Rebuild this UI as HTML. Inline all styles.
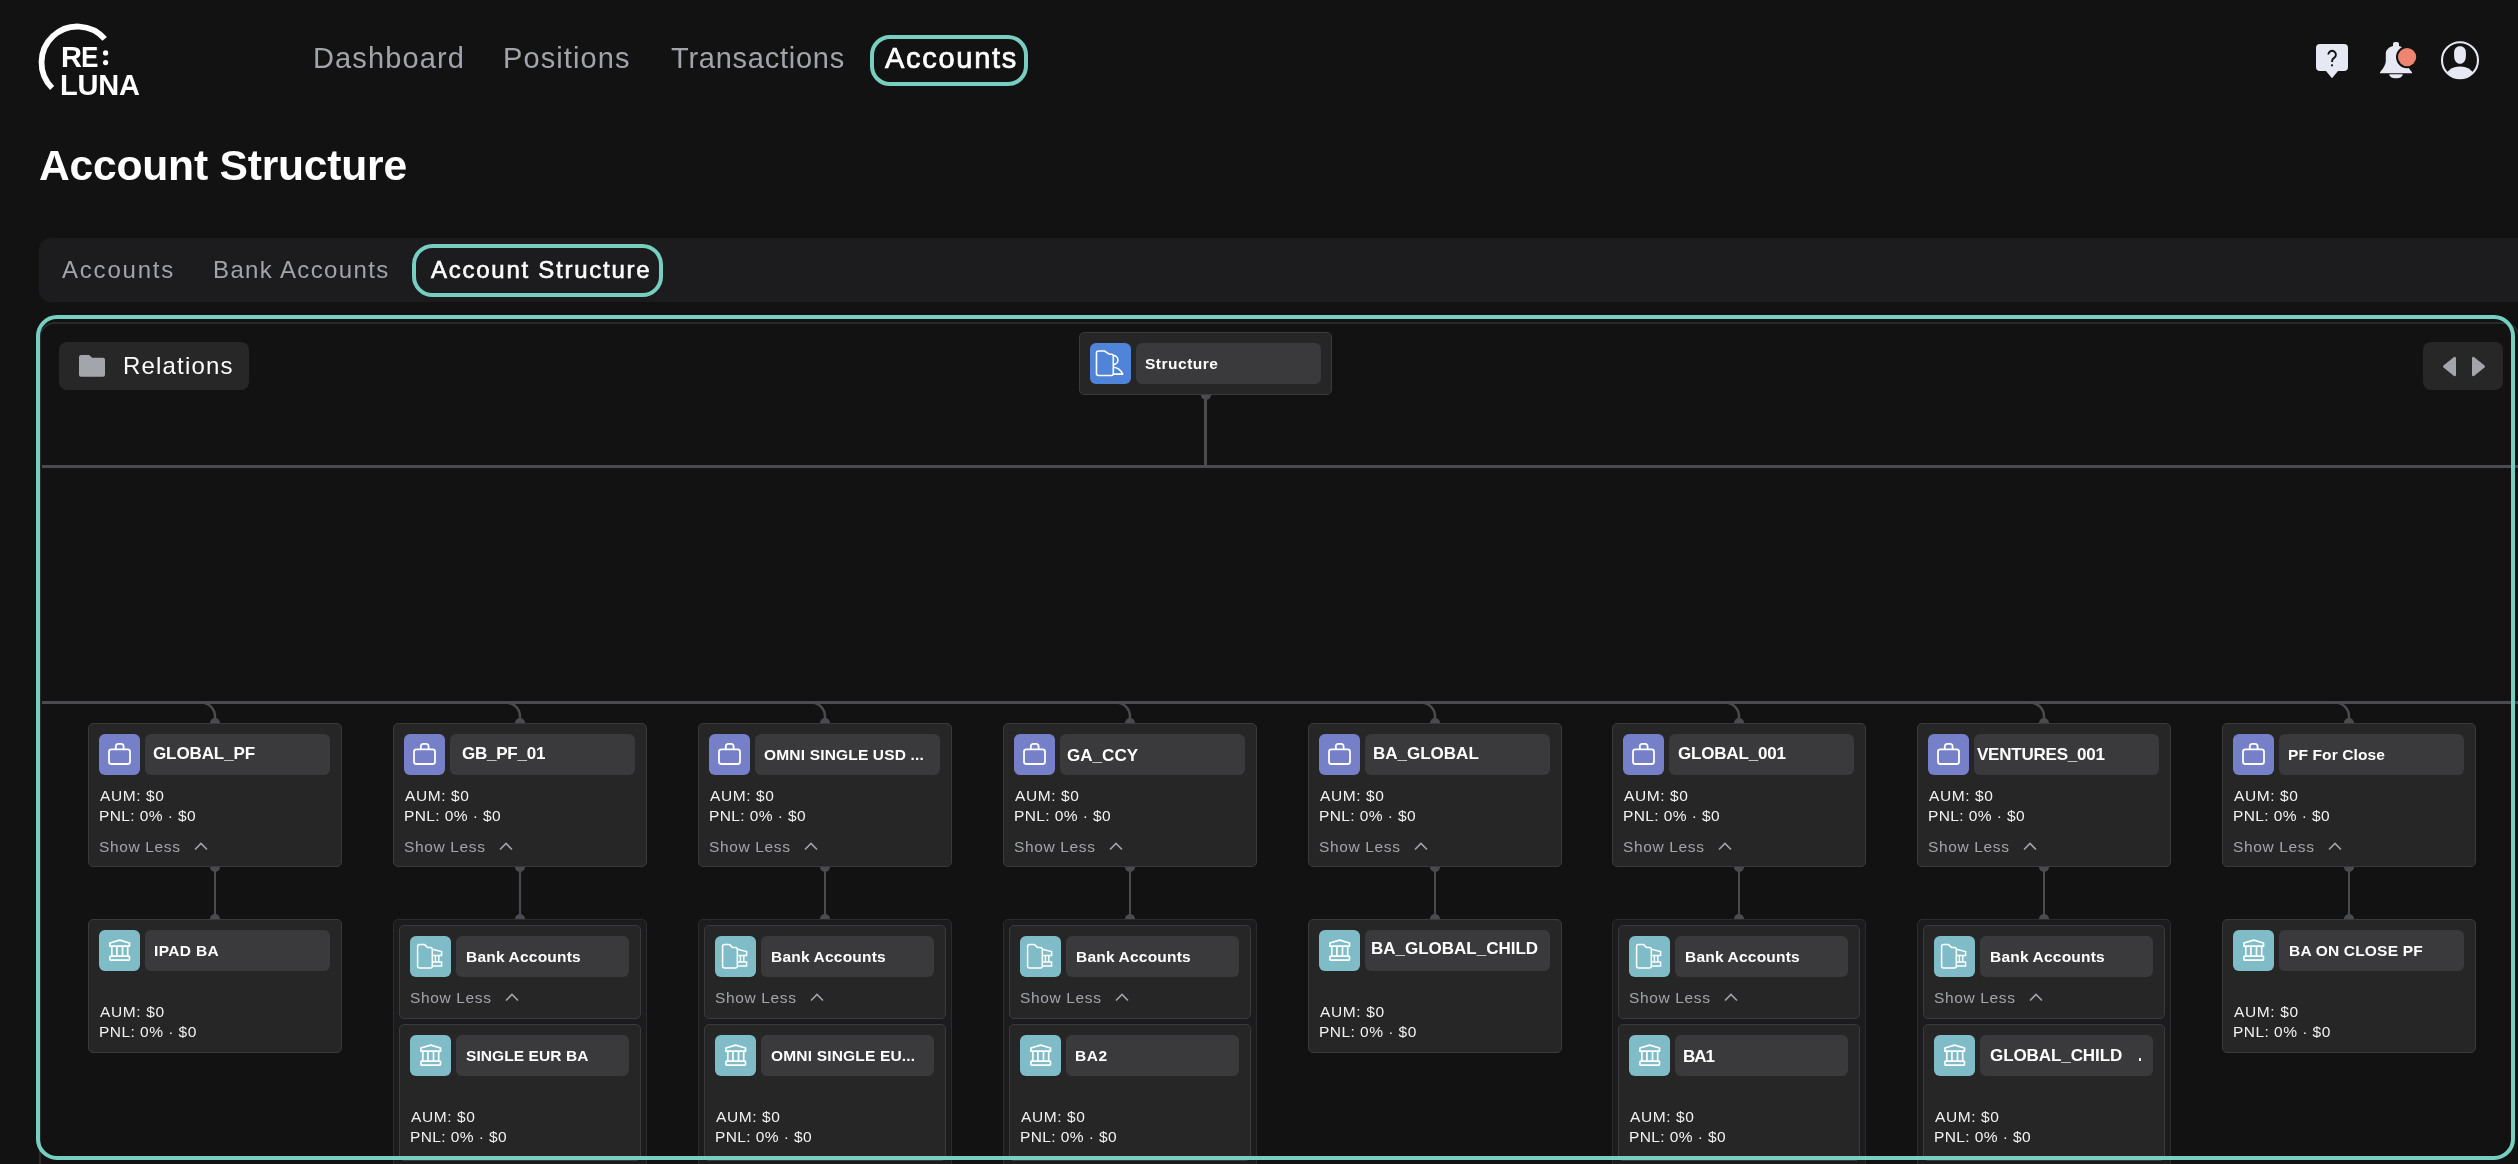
<!DOCTYPE html>
<html><head><meta charset="utf-8"><title>Account Structure</title>
<style>
html,body{margin:0;padding:0;}
body{width:2518px;height:1164px;background:#121212;position:relative;overflow:hidden;font-family:"Liberation Sans",sans-serif;}
.t{position:absolute;white-space:nowrap;will-change:transform;}
.b{position:absolute;}
</style></head><body>
<svg class="b" style="left:0;top:0" width="160" height="110" viewBox="0 0 160 110">
<path d="M52.1 88 A36 36 0 1 1 104.7 38.9" fill="none" stroke="#fff" stroke-width="5.8"/>
<circle cx="105.6" cy="52.9" r="2.6" fill="#fff"/><circle cx="105.6" cy="62.6" r="2.6" fill="#fff"/>
</svg>
<div class="t" style="left:60.68px;top:43px;font-size:29px;line-height:29px;color:#fff;font-weight:700;letter-spacing:0.000px;">R</div>
<div class="t" style="left:81.03px;top:43px;font-size:29px;line-height:29px;color:#fff;font-weight:700;letter-spacing:0.000px;transform:scaleX(0.9);transform-origin:0 0;">E</div>
<div class="t" style="left:60.11px;top:71px;font-size:29px;line-height:29px;color:#fff;font-weight:700;letter-spacing:-0.179px;">LUNA</div>
<div class="t" style="left:312.58px;top:44px;font-size:29px;line-height:29px;color:#a2a4ac;font-weight:400;letter-spacing:1.114px;">Dashboard</div>
<div class="t" style="left:503.44px;top:44px;font-size:29px;line-height:29px;color:#a2a4ac;font-weight:400;letter-spacing:1.115px;">Positions</div>
<div class="t" style="left:670.65px;top:44px;font-size:29px;line-height:29px;color:#a2a4ac;font-weight:400;letter-spacing:0.753px;">Transactions</div>
<div class="b" style="left:870px;top:35px;width:158px;height:51px;background:none;border:4px solid #76cfc1;border-radius:20px;box-sizing:border-box;"></div>
<div class="t" style="left:884.80px;top:44px;font-size:29px;line-height:29px;color:#fff;font-weight:400;letter-spacing:1.709px;-webkit-text-stroke:0.7px #fff;">Accounts</div>
<svg class="b" style="left:2300px;top:30px" width="200" height="60" viewBox="2300 30 200 60">
<defs><clipPath id="avc"><circle cx="2460" cy="60.2" r="17.8"/></clipPath></defs>
<path d="M2320 44 h24 a4 4 0 0 1 4 4 v19 a4 4 0 0 1 -4 4 h-6 l-6 7.2 l-6 -7.2 h-6 a4 4 0 0 1 -4 -4 v-19 a4 4 0 0 1 4 -4z" fill="#e6e8f3"/>
<path d="M2328.3 54.6 a3.8 3.8 0 1 1 5.8 3.3 c-1.2 .8 -2 1.6 -2 3.1 v.9" fill="none" stroke="#121212" stroke-width="1.9"/>
<circle cx="2332" cy="65.3" r="1.15" fill="#121212"/>
<path d="M2393 46 C2389 47 2386 49.5 2385.8 53.5 V61 C2385.8 64 2384 67.5 2380 72.3 V73.3 H2412 V72.3 C2408 67.5 2406.2 64 2406.2 61 V53.5 C2406 49.5 2403 47 2399 46 V44 A2 2 0 0 0 2397 42 H2395 A2 2 0 0 0 2393 44 Z" fill="#e6e8f3"/>
<path d="M2389.3 74.3 H2402.7 C2402.7 76.8 2400 78.3 2396 78.3 C2392 78.3 2389.3 76.8 2389.3 74.3Z" fill="#e6e8f3"/>
<circle cx="2407.1" cy="57.1" r="11.1" fill="#121212"/>
<circle cx="2407.1" cy="57.1" r="9.1" fill="#ee8570"/>
<circle cx="2460" cy="60.2" r="18" fill="none" stroke="#e6e8f3" stroke-width="2.1"/>
<path d="M2460 46.2 c3.6 0 5.9 2.4 5.9 6.5 v3.2 c0 4.6 -2.5 7.9 -5.9 7.9 s-5.9 -3.3 -5.9 -7.9 v-3.2 c0 -4.1 2.3 -6.5 5.9 -6.5z" fill="#e6e8f3"/>
<ellipse cx="2460" cy="77.8" rx="14.6" ry="11.3" fill="#e6e8f3" clip-path="url(#avc)"/>
</svg>
<div class="t" style="left:39.28px;top:144px;font-size:42.6px;line-height:42.6px;color:#fff;font-weight:700;letter-spacing:-0.216px;">Account Structure</div>
<div class="b" style="left:39px;top:238px;width:2600px;height:64px;background:#1c1c1e;border-radius:12px;"></div>
<div class="t" style="left:61.87px;top:258px;font-size:24px;line-height:24px;color:#a2a4ac;font-weight:400;letter-spacing:1.798px;">Accounts</div>
<div class="t" style="left:213.48px;top:258px;font-size:24px;line-height:24px;color:#a2a4ac;font-weight:400;letter-spacing:1.377px;">Bank Accounts</div>
<div class="b" style="left:412px;top:244px;width:251px;height:53px;background:none;border:4px solid #76cfc1;border-radius:20.5px;box-sizing:border-box;"></div>
<div class="t" style="left:430.67px;top:258px;font-size:24px;line-height:24px;color:#fff;font-weight:400;letter-spacing:1.740px;-webkit-text-stroke:0.6px #fff;">Account Structure</div>
<div class="b" style="left:39px;top:322px;width:2481px;height:1000px;background:none;border:2px solid #2a2a2a;border-radius:16px;box-sizing:border-box;"></div>
<div class="b" style="left:59px;top:342px;width:190px;height:48px;background:#272727;border-radius:8px;"></div>
<svg class="b" style="left:70px;top:350px" width="40" height="34" viewBox="70 350 40 34">
<path d="M81 355 h7 c1.2 0 1.8 .4 2.6 1.2 l1.6 1.6 h10.8 a2 2 0 0 1 2 2 v15 a2 2 0 0 1 -2 2 h-22 a2 2 0 0 1 -2 -2 v-17.8 a2 2 0 0 1 2 -2z" fill="#a3a5ad"/>
</svg>
<div class="t" style="left:122.74px;top:354px;font-size:24px;line-height:24px;color:#fff;font-weight:400;letter-spacing:1.171px;">Relations</div>
<div class="b" style="left:2423px;top:342px;width:80px;height:48px;background:#272727;border-radius:8px;"></div>
<svg class="b" style="left:2430px;top:350px" width="70" height="34" viewBox="2430 350 70 34">
<path d="M2456 357 v18 a1.2 1.2 0 0 1 -2 .9 l-10.5 -8.5 a1.2 1.2 0 0 1 0 -1.8 l10.5 -8.5 a1.2 1.2 0 0 1 2 .9z" fill="#a3a5ad"/>
<path d="M2472 357 v18 a1.2 1.2 0 0 0 2 .9 l10.5 -8.5 a1.2 1.2 0 0 0 0 -1.8 l-10.5 -8.5 a1.2 1.2 0 0 0 -2 .9z" fill="#a3a5ad"/>
</svg>
<div class="b" style="left:1079px;top:332px;width:253px;height:63px;background:#262626;border:1px solid #3a3a3c;border-radius:5px;box-sizing:border-box;"></div>
<svg class="b" style="left:1090px;top:343px" width="41" height="41" viewBox="0 0 41 41"><rect width="41" height="41" rx="6" fill="#4f84d8"/><path d="M6.5 10 a2 2 0 0 1 2 -2 h5.9 l4.8 3.2 h2.1 a2 2 0 0 1 2 2 v17.3 a2 2 0 0 1 -2 2 h-12.8 a2 2 0 0 1 -2 -2z" fill="none" stroke="#fff" stroke-width="1.6" stroke-linejoin="round"/><path d="M23.3 12.4 a4.6 4.6 0 0 1 0 9.2 M23.3 24.3 c4 0.3 7.6 3 9.4 6.8 h-9.4" fill="none" stroke="#fff" stroke-width="1.6" stroke-linejoin="round"/></svg>
<div class="b" style="left:1136px;top:343px;width:185px;height:41px;background:#3a3a3c;border-radius:6px;"></div>
<div class="t" style="left:1144.94px;top:356px;font-size:15.5px;line-height:15.5px;color:#fff;font-weight:700;letter-spacing:0.501px;">Structure</div>
<div class="b" style="left:1204px;top:395px;width:3px;height:71px;background:#4a4b4f;border-radius:0px;"></div>
<div class="b" style="left:42px;top:465px;width:2600px;height:3px;background:#4a4b4f;border-radius:0px;"></div>
<div class="b" style="left:42px;top:701px;width:2600px;height:3px;background:#4a4b4f;border-radius:0px;"></div>
<div class="b" style="left:1200.5px;top:395px;width:10px;height:5px;background:#4a4b4f;border-radius:0 0 5px 5px"></div>
<svg class="b" style="left:195px;top:700px" width="24" height="24" viewBox="0 0 24 24"><path d="M4 2.5 h2 a14 14 0 0 1 14 14 v4" fill="none" stroke="#4a4b4f" stroke-width="2.5"/></svg>
<div class="b" style="left:210px;top:718px;width:10px;height:5px;background:#4a4b4f;border-radius:5px 5px 0 0"></div>
<div class="b" style="left:88px;top:723px;width:254px;height:144px;background:#262626;border:1px solid #3a3a3c;border-radius:5px;box-sizing:border-box;"></div>
<svg class="b" style="left:99px;top:734px" width="41" height="41" viewBox="0 0 41 41"><rect width="41" height="41" rx="6" fill="#7580c8"/><rect x="10" y="15.4" width="21" height="14.6" rx="2.4" fill="none" stroke="#fff" stroke-width="1.8"/><path d="M16.8 15.4 v-3 a2.6 2.6 0 0 1 2.6 -2.6 h2.6 a2.6 2.6 0 0 1 2.6 2.6 v3" fill="none" stroke="#fff" stroke-width="1.8"/></svg>
<div class="b" style="left:145px;top:734px;width:185px;height:41px;background:#3a3a3c;border-radius:6px;"></div>
<div class="t" style="left:152.63px;top:745px;font-size:17px;line-height:17px;color:#fff;font-weight:700;letter-spacing:-0.102px;">GLOBAL_PF</div>
<div class="t" style="left:100.16px;top:788px;font-size:15.5px;line-height:15.5px;color:#f2f2f2;font-weight:400;letter-spacing:0.606px;">AUM: $0</div>
<div class="t" style="left:99.07px;top:808px;font-size:15.5px;line-height:15.5px;color:#f2f2f2;font-weight:400;letter-spacing:0.405px;">PNL: 0% · $0</div>
<div class="t" style="left:98.73px;top:839px;font-size:15.5px;line-height:15.5px;color:#a3a5ad;font-weight:400;letter-spacing:0.633px;">Show Less</div>
<svg class="b" style="left:194px;top:842px" width="14" height="9" viewBox="0 0 14 9"><path d="M1 7.5 l6 -6 l6 6" fill="none" stroke="#a3a5ad" stroke-width="1.6"/></svg>
<div class="b" style="left:210px;top:867px;width:10px;height:5px;background:#4a4b4f;border-radius:0 0 5px 5px"></div>
<div class="b" style="left:213.75px;top:870px;width:2.5px;height:47px;background:#4a4b4f;border-radius:0px;"></div>
<div class="b" style="left:210px;top:914px;width:10px;height:5px;background:#4a4b4f;border-radius:5px 5px 0 0"></div>
<div class="b" style="left:88px;top:919px;width:254px;height:134px;background:#262626;border:1px solid #3a3a3c;border-radius:5px;box-sizing:border-box;"></div>
<svg class="b" style="left:99px;top:930px" width="41" height="41" viewBox="0 0 41 41"><rect width="41" height="41" rx="6" fill="#7fbcc8"/><path d="M10.9 16.2 v-3.2 l9.8 -2.9 l9.8 2.9 v3.2z" fill="none" stroke="#fff" stroke-width="1.7" stroke-linejoin="round"/><path d="M12.8 16.4 v9.6 M17.9 16.4 v9.6 M23.5 16.4 v9.6 M28.7 16.4 v9.6" fill="none" stroke="#fff" stroke-width="1.7"/><rect x="10.9" y="26.2" width="19.6" height="3.9" rx="0.8" fill="none" stroke="#fff" stroke-width="1.7"/></svg>
<div class="b" style="left:145px;top:930px;width:185px;height:41px;background:#3a3a3c;border-radius:6px;"></div>
<div class="t" style="left:154.29px;top:943px;font-size:15.5px;line-height:15.5px;color:#fff;font-weight:700;letter-spacing:0.350px;">IPAD BA</div>
<div class="t" style="left:99.96px;top:1004px;font-size:15.5px;line-height:15.5px;color:#f2f2f2;font-weight:400;letter-spacing:0.638px;">AUM: $0</div>
<div class="t" style="left:98.72px;top:1024px;font-size:15.5px;line-height:15.5px;color:#f2f2f2;font-weight:400;letter-spacing:0.468px;">PNL: 0% · $0</div>
<svg class="b" style="left:500px;top:700px" width="24" height="24" viewBox="0 0 24 24"><path d="M4 2.5 h2 a14 14 0 0 1 14 14 v4" fill="none" stroke="#4a4b4f" stroke-width="2.5"/></svg>
<div class="b" style="left:515px;top:718px;width:10px;height:5px;background:#4a4b4f;border-radius:5px 5px 0 0"></div>
<div class="b" style="left:393px;top:723px;width:254px;height:144px;background:#262626;border:1px solid #3a3a3c;border-radius:5px;box-sizing:border-box;"></div>
<svg class="b" style="left:404px;top:734px" width="41" height="41" viewBox="0 0 41 41"><rect width="41" height="41" rx="6" fill="#7580c8"/><rect x="10" y="15.4" width="21" height="14.6" rx="2.4" fill="none" stroke="#fff" stroke-width="1.8"/><path d="M16.8 15.4 v-3 a2.6 2.6 0 0 1 2.6 -2.6 h2.6 a2.6 2.6 0 0 1 2.6 2.6 v3" fill="none" stroke="#fff" stroke-width="1.8"/></svg>
<div class="b" style="left:450px;top:734px;width:185px;height:41px;background:#3a3a3c;border-radius:6px;"></div>
<div class="t" style="left:462.16px;top:745px;font-size:17px;line-height:17px;color:#fff;font-weight:700;letter-spacing:-0.244px;">GB_PF_01</div>
<div class="t" style="left:405.16px;top:788px;font-size:15.5px;line-height:15.5px;color:#f2f2f2;font-weight:400;letter-spacing:0.606px;">AUM: $0</div>
<div class="t" style="left:404.07px;top:808px;font-size:15.5px;line-height:15.5px;color:#f2f2f2;font-weight:400;letter-spacing:0.405px;">PNL: 0% · $0</div>
<div class="t" style="left:403.73px;top:839px;font-size:15.5px;line-height:15.5px;color:#a3a5ad;font-weight:400;letter-spacing:0.633px;">Show Less</div>
<svg class="b" style="left:499px;top:842px" width="14" height="9" viewBox="0 0 14 9"><path d="M1 7.5 l6 -6 l6 6" fill="none" stroke="#a3a5ad" stroke-width="1.6"/></svg>
<div class="b" style="left:515px;top:867px;width:10px;height:5px;background:#4a4b4f;border-radius:0 0 5px 5px"></div>
<div class="b" style="left:518.75px;top:870px;width:2.5px;height:47px;background:#4a4b4f;border-radius:0px;"></div>
<div class="b" style="left:515px;top:914px;width:10px;height:5px;background:#4a4b4f;border-radius:5px 5px 0 0"></div>
<div class="b" style="left:393px;top:919px;width:254px;height:400px;background:#1c1c1e;border:1px solid #2c2c2e;border-radius:5px;box-sizing:border-box;"></div>
<div class="b" style="left:399px;top:925px;width:242px;height:94px;background:#262626;border:1px solid #3a3a3c;border-radius:5px;box-sizing:border-box;"></div>
<svg class="b" style="left:410px;top:936px" width="41" height="41" viewBox="0 0 41 41"><rect width="41" height="41" rx="6" fill="#7fbcc8"/><path d="M7.6 10.6 a2 2 0 0 1 2 -2 h5 l3 3 h2.7 a2 2 0 0 1 2 2 v16.4 a2 2 0 0 1 -2 2 h-10.7 a2 2 0 0 1 -2 -2z" fill="none" stroke="#fff" stroke-width="1.5" stroke-linejoin="round"/><path d="M22.3 13.2 l9.3 2.4 v3.9 h-9.3 M25.4 19.5 v6.5 M28.8 19.5 v6.5 M22.3 26 h9.3 v3.9 h-9.3" fill="none" stroke="#fff" stroke-width="1.5"/></svg>
<div class="b" style="left:456px;top:936px;width:173px;height:41px;background:#3a3a3c;border-radius:6px;"></div>
<div class="t" style="left:465.93px;top:949px;font-size:15.5px;line-height:15.5px;color:#fff;font-weight:700;letter-spacing:0.198px;">Bank Accounts</div>
<div class="t" style="left:409.86px;top:990px;font-size:15.5px;line-height:15.5px;color:#a3a5ad;font-weight:400;letter-spacing:0.635px;">Show Less</div>
<svg class="b" style="left:505px;top:993px" width="14" height="9" viewBox="0 0 14 9"><path d="M1 7.5 l6 -6 l6 6" fill="none" stroke="#a3a5ad" stroke-width="1.6"/></svg>
<div class="b" style="left:399px;top:1024px;width:242px;height:137px;background:#262626;border:1px solid #3a3a3c;border-radius:5px;box-sizing:border-box;"></div>
<svg class="b" style="left:410px;top:1035px" width="41" height="41" viewBox="0 0 41 41"><rect width="41" height="41" rx="6" fill="#7fbcc8"/><path d="M10.9 16.2 v-3.2 l9.8 -2.9 l9.8 2.9 v3.2z" fill="none" stroke="#fff" stroke-width="1.7" stroke-linejoin="round"/><path d="M12.8 16.4 v9.6 M17.9 16.4 v9.6 M23.5 16.4 v9.6 M28.7 16.4 v9.6" fill="none" stroke="#fff" stroke-width="1.7"/><rect x="10.9" y="26.2" width="19.6" height="3.9" rx="0.8" fill="none" stroke="#fff" stroke-width="1.7"/></svg>
<div class="b" style="left:456px;top:1035px;width:173px;height:41px;background:#3a3a3c;border-radius:6px;"></div>
<div class="t" style="left:465.88px;top:1048px;font-size:15.5px;line-height:15.5px;color:#fff;font-weight:700;letter-spacing:0.076px;">SINGLE EUR BA</div>
<div class="t" style="left:410.89px;top:1109px;font-size:15.5px;line-height:15.5px;color:#f2f2f2;font-weight:400;letter-spacing:0.579px;">AUM: $0</div>
<div class="t" style="left:409.67px;top:1129px;font-size:15.5px;line-height:15.5px;color:#f2f2f2;font-weight:400;letter-spacing:0.399px;">PNL: 0% · $0</div>
<svg class="b" style="left:805px;top:700px" width="24" height="24" viewBox="0 0 24 24"><path d="M4 2.5 h2 a14 14 0 0 1 14 14 v4" fill="none" stroke="#4a4b4f" stroke-width="2.5"/></svg>
<div class="b" style="left:820px;top:718px;width:10px;height:5px;background:#4a4b4f;border-radius:5px 5px 0 0"></div>
<div class="b" style="left:698px;top:723px;width:254px;height:144px;background:#262626;border:1px solid #3a3a3c;border-radius:5px;box-sizing:border-box;"></div>
<svg class="b" style="left:709px;top:734px" width="41" height="41" viewBox="0 0 41 41"><rect width="41" height="41" rx="6" fill="#7580c8"/><rect x="10" y="15.4" width="21" height="14.6" rx="2.4" fill="none" stroke="#fff" stroke-width="1.8"/><path d="M16.8 15.4 v-3 a2.6 2.6 0 0 1 2.6 -2.6 h2.6 a2.6 2.6 0 0 1 2.6 2.6 v3" fill="none" stroke="#fff" stroke-width="1.8"/></svg>
<div class="b" style="left:755px;top:734px;width:185px;height:41px;background:#3a3a3c;border-radius:6px;"></div>
<div class="t" style="left:764.24px;top:747px;font-size:15.5px;line-height:15.5px;color:#fff;font-weight:700;letter-spacing:0.174px;">OMNI SINGLE USD ...</div>
<div class="t" style="left:710.16px;top:788px;font-size:15.5px;line-height:15.5px;color:#f2f2f2;font-weight:400;letter-spacing:0.606px;">AUM: $0</div>
<div class="t" style="left:709.07px;top:808px;font-size:15.5px;line-height:15.5px;color:#f2f2f2;font-weight:400;letter-spacing:0.405px;">PNL: 0% · $0</div>
<div class="t" style="left:708.73px;top:839px;font-size:15.5px;line-height:15.5px;color:#a3a5ad;font-weight:400;letter-spacing:0.633px;">Show Less</div>
<svg class="b" style="left:804px;top:842px" width="14" height="9" viewBox="0 0 14 9"><path d="M1 7.5 l6 -6 l6 6" fill="none" stroke="#a3a5ad" stroke-width="1.6"/></svg>
<div class="b" style="left:820px;top:867px;width:10px;height:5px;background:#4a4b4f;border-radius:0 0 5px 5px"></div>
<div class="b" style="left:823.75px;top:870px;width:2.5px;height:47px;background:#4a4b4f;border-radius:0px;"></div>
<div class="b" style="left:820px;top:914px;width:10px;height:5px;background:#4a4b4f;border-radius:5px 5px 0 0"></div>
<div class="b" style="left:698px;top:919px;width:254px;height:400px;background:#1c1c1e;border:1px solid #2c2c2e;border-radius:5px;box-sizing:border-box;"></div>
<div class="b" style="left:704px;top:925px;width:242px;height:94px;background:#262626;border:1px solid #3a3a3c;border-radius:5px;box-sizing:border-box;"></div>
<svg class="b" style="left:715px;top:936px" width="41" height="41" viewBox="0 0 41 41"><rect width="41" height="41" rx="6" fill="#7fbcc8"/><path d="M7.6 10.6 a2 2 0 0 1 2 -2 h5 l3 3 h2.7 a2 2 0 0 1 2 2 v16.4 a2 2 0 0 1 -2 2 h-10.7 a2 2 0 0 1 -2 -2z" fill="none" stroke="#fff" stroke-width="1.5" stroke-linejoin="round"/><path d="M22.3 13.2 l9.3 2.4 v3.9 h-9.3 M25.4 19.5 v6.5 M28.8 19.5 v6.5 M22.3 26 h9.3 v3.9 h-9.3" fill="none" stroke="#fff" stroke-width="1.5"/></svg>
<div class="b" style="left:761px;top:936px;width:173px;height:41px;background:#3a3a3c;border-radius:6px;"></div>
<div class="t" style="left:770.93px;top:949px;font-size:15.5px;line-height:15.5px;color:#fff;font-weight:700;letter-spacing:0.198px;">Bank Accounts</div>
<div class="t" style="left:714.86px;top:990px;font-size:15.5px;line-height:15.5px;color:#a3a5ad;font-weight:400;letter-spacing:0.635px;">Show Less</div>
<svg class="b" style="left:810px;top:993px" width="14" height="9" viewBox="0 0 14 9"><path d="M1 7.5 l6 -6 l6 6" fill="none" stroke="#a3a5ad" stroke-width="1.6"/></svg>
<div class="b" style="left:704px;top:1024px;width:242px;height:137px;background:#262626;border:1px solid #3a3a3c;border-radius:5px;box-sizing:border-box;"></div>
<svg class="b" style="left:715px;top:1035px" width="41" height="41" viewBox="0 0 41 41"><rect width="41" height="41" rx="6" fill="#7fbcc8"/><path d="M10.9 16.2 v-3.2 l9.8 -2.9 l9.8 2.9 v3.2z" fill="none" stroke="#fff" stroke-width="1.7" stroke-linejoin="round"/><path d="M12.8 16.4 v9.6 M17.9 16.4 v9.6 M23.5 16.4 v9.6 M28.7 16.4 v9.6" fill="none" stroke="#fff" stroke-width="1.7"/><rect x="10.9" y="26.2" width="19.6" height="3.9" rx="0.8" fill="none" stroke="#fff" stroke-width="1.7"/></svg>
<div class="b" style="left:761px;top:1035px;width:173px;height:41px;background:#3a3a3c;border-radius:6px;"></div>
<div class="t" style="left:770.56px;top:1048px;font-size:15.5px;line-height:15.5px;color:#fff;font-weight:700;letter-spacing:0.178px;">OMNI SINGLE EU...</div>
<div class="t" style="left:715.89px;top:1109px;font-size:15.5px;line-height:15.5px;color:#f2f2f2;font-weight:400;letter-spacing:0.579px;">AUM: $0</div>
<div class="t" style="left:714.67px;top:1129px;font-size:15.5px;line-height:15.5px;color:#f2f2f2;font-weight:400;letter-spacing:0.399px;">PNL: 0% · $0</div>
<svg class="b" style="left:1110px;top:700px" width="24" height="24" viewBox="0 0 24 24"><path d="M4 2.5 h2 a14 14 0 0 1 14 14 v4" fill="none" stroke="#4a4b4f" stroke-width="2.5"/></svg>
<div class="b" style="left:1125px;top:718px;width:10px;height:5px;background:#4a4b4f;border-radius:5px 5px 0 0"></div>
<div class="b" style="left:1003px;top:723px;width:254px;height:144px;background:#262626;border:1px solid #3a3a3c;border-radius:5px;box-sizing:border-box;"></div>
<svg class="b" style="left:1014px;top:734px" width="41" height="41" viewBox="0 0 41 41"><rect width="41" height="41" rx="6" fill="#7580c8"/><rect x="10" y="15.4" width="21" height="14.6" rx="2.4" fill="none" stroke="#fff" stroke-width="1.8"/><path d="M16.8 15.4 v-3 a2.6 2.6 0 0 1 2.6 -2.6 h2.6 a2.6 2.6 0 0 1 2.6 2.6 v3" fill="none" stroke="#fff" stroke-width="1.8"/></svg>
<div class="b" style="left:1060px;top:734px;width:185px;height:41px;background:#3a3a3c;border-radius:6px;"></div>
<div class="t" style="left:1066.81px;top:747px;font-size:17px;line-height:17px;color:#fff;font-weight:700;letter-spacing:0.056px;">GA_CCY</div>
<div class="t" style="left:1015.16px;top:788px;font-size:15.5px;line-height:15.5px;color:#f2f2f2;font-weight:400;letter-spacing:0.606px;">AUM: $0</div>
<div class="t" style="left:1014.07px;top:808px;font-size:15.5px;line-height:15.5px;color:#f2f2f2;font-weight:400;letter-spacing:0.405px;">PNL: 0% · $0</div>
<div class="t" style="left:1013.73px;top:839px;font-size:15.5px;line-height:15.5px;color:#a3a5ad;font-weight:400;letter-spacing:0.633px;">Show Less</div>
<svg class="b" style="left:1109px;top:842px" width="14" height="9" viewBox="0 0 14 9"><path d="M1 7.5 l6 -6 l6 6" fill="none" stroke="#a3a5ad" stroke-width="1.6"/></svg>
<div class="b" style="left:1125px;top:867px;width:10px;height:5px;background:#4a4b4f;border-radius:0 0 5px 5px"></div>
<div class="b" style="left:1128.75px;top:870px;width:2.5px;height:47px;background:#4a4b4f;border-radius:0px;"></div>
<div class="b" style="left:1125px;top:914px;width:10px;height:5px;background:#4a4b4f;border-radius:5px 5px 0 0"></div>
<div class="b" style="left:1003px;top:919px;width:254px;height:400px;background:#1c1c1e;border:1px solid #2c2c2e;border-radius:5px;box-sizing:border-box;"></div>
<div class="b" style="left:1009px;top:925px;width:242px;height:94px;background:#262626;border:1px solid #3a3a3c;border-radius:5px;box-sizing:border-box;"></div>
<svg class="b" style="left:1020px;top:936px" width="41" height="41" viewBox="0 0 41 41"><rect width="41" height="41" rx="6" fill="#7fbcc8"/><path d="M7.6 10.6 a2 2 0 0 1 2 -2 h5 l3 3 h2.7 a2 2 0 0 1 2 2 v16.4 a2 2 0 0 1 -2 2 h-10.7 a2 2 0 0 1 -2 -2z" fill="none" stroke="#fff" stroke-width="1.5" stroke-linejoin="round"/><path d="M22.3 13.2 l9.3 2.4 v3.9 h-9.3 M25.4 19.5 v6.5 M28.8 19.5 v6.5 M22.3 26 h9.3 v3.9 h-9.3" fill="none" stroke="#fff" stroke-width="1.5"/></svg>
<div class="b" style="left:1066px;top:936px;width:173px;height:41px;background:#3a3a3c;border-radius:6px;"></div>
<div class="t" style="left:1075.93px;top:949px;font-size:15.5px;line-height:15.5px;color:#fff;font-weight:700;letter-spacing:0.198px;">Bank Accounts</div>
<div class="t" style="left:1019.86px;top:990px;font-size:15.5px;line-height:15.5px;color:#a3a5ad;font-weight:400;letter-spacing:0.635px;">Show Less</div>
<svg class="b" style="left:1115px;top:993px" width="14" height="9" viewBox="0 0 14 9"><path d="M1 7.5 l6 -6 l6 6" fill="none" stroke="#a3a5ad" stroke-width="1.6"/></svg>
<div class="b" style="left:1009px;top:1024px;width:242px;height:137px;background:#262626;border:1px solid #3a3a3c;border-radius:5px;box-sizing:border-box;"></div>
<svg class="b" style="left:1020px;top:1035px" width="41" height="41" viewBox="0 0 41 41"><rect width="41" height="41" rx="6" fill="#7fbcc8"/><path d="M10.9 16.2 v-3.2 l9.8 -2.9 l9.8 2.9 v3.2z" fill="none" stroke="#fff" stroke-width="1.7" stroke-linejoin="round"/><path d="M12.8 16.4 v9.6 M17.9 16.4 v9.6 M23.5 16.4 v9.6 M28.7 16.4 v9.6" fill="none" stroke="#fff" stroke-width="1.7"/><rect x="10.9" y="26.2" width="19.6" height="3.9" rx="0.8" fill="none" stroke="#fff" stroke-width="1.7"/></svg>
<div class="b" style="left:1066px;top:1035px;width:173px;height:41px;background:#3a3a3c;border-radius:6px;"></div>
<div class="t" style="left:1075.29px;top:1048px;font-size:15.5px;line-height:15.5px;color:#fff;font-weight:700;letter-spacing:0.538px;">BA2</div>
<div class="t" style="left:1020.89px;top:1109px;font-size:15.5px;line-height:15.5px;color:#f2f2f2;font-weight:400;letter-spacing:0.579px;">AUM: $0</div>
<div class="t" style="left:1019.67px;top:1129px;font-size:15.5px;line-height:15.5px;color:#f2f2f2;font-weight:400;letter-spacing:0.399px;">PNL: 0% · $0</div>
<svg class="b" style="left:1415px;top:700px" width="24" height="24" viewBox="0 0 24 24"><path d="M4 2.5 h2 a14 14 0 0 1 14 14 v4" fill="none" stroke="#4a4b4f" stroke-width="2.5"/></svg>
<div class="b" style="left:1430px;top:718px;width:10px;height:5px;background:#4a4b4f;border-radius:5px 5px 0 0"></div>
<div class="b" style="left:1308px;top:723px;width:254px;height:144px;background:#262626;border:1px solid #3a3a3c;border-radius:5px;box-sizing:border-box;"></div>
<svg class="b" style="left:1319px;top:734px" width="41" height="41" viewBox="0 0 41 41"><rect width="41" height="41" rx="6" fill="#7580c8"/><rect x="10" y="15.4" width="21" height="14.6" rx="2.4" fill="none" stroke="#fff" stroke-width="1.8"/><path d="M16.8 15.4 v-3 a2.6 2.6 0 0 1 2.6 -2.6 h2.6 a2.6 2.6 0 0 1 2.6 2.6 v3" fill="none" stroke="#fff" stroke-width="1.8"/></svg>
<div class="b" style="left:1365px;top:734px;width:185px;height:41px;background:#3a3a3c;border-radius:6px;"></div>
<div class="t" style="left:1373.25px;top:745px;font-size:17px;line-height:17px;color:#fff;font-weight:700;letter-spacing:-0.002px;">BA_GLOBAL</div>
<div class="t" style="left:1320.16px;top:788px;font-size:15.5px;line-height:15.5px;color:#f2f2f2;font-weight:400;letter-spacing:0.606px;">AUM: $0</div>
<div class="t" style="left:1319.07px;top:808px;font-size:15.5px;line-height:15.5px;color:#f2f2f2;font-weight:400;letter-spacing:0.405px;">PNL: 0% · $0</div>
<div class="t" style="left:1318.73px;top:839px;font-size:15.5px;line-height:15.5px;color:#a3a5ad;font-weight:400;letter-spacing:0.633px;">Show Less</div>
<svg class="b" style="left:1414px;top:842px" width="14" height="9" viewBox="0 0 14 9"><path d="M1 7.5 l6 -6 l6 6" fill="none" stroke="#a3a5ad" stroke-width="1.6"/></svg>
<div class="b" style="left:1430px;top:867px;width:10px;height:5px;background:#4a4b4f;border-radius:0 0 5px 5px"></div>
<div class="b" style="left:1433.75px;top:870px;width:2.5px;height:47px;background:#4a4b4f;border-radius:0px;"></div>
<div class="b" style="left:1430px;top:914px;width:10px;height:5px;background:#4a4b4f;border-radius:5px 5px 0 0"></div>
<div class="b" style="left:1308px;top:919px;width:254px;height:134px;background:#262626;border:1px solid #3a3a3c;border-radius:5px;box-sizing:border-box;"></div>
<svg class="b" style="left:1319px;top:930px" width="41" height="41" viewBox="0 0 41 41"><rect width="41" height="41" rx="6" fill="#7fbcc8"/><path d="M10.9 16.2 v-3.2 l9.8 -2.9 l9.8 2.9 v3.2z" fill="none" stroke="#fff" stroke-width="1.7" stroke-linejoin="round"/><path d="M12.8 16.4 v9.6 M17.9 16.4 v9.6 M23.5 16.4 v9.6 M28.7 16.4 v9.6" fill="none" stroke="#fff" stroke-width="1.7"/><rect x="10.9" y="26.2" width="19.6" height="3.9" rx="0.8" fill="none" stroke="#fff" stroke-width="1.7"/></svg>
<div class="b" style="left:1365px;top:930px;width:185px;height:41px;background:#3a3a3c;border-radius:6px;"></div>
<div class="t" style="left:1371.25px;top:940px;font-size:17px;line-height:17px;color:#fff;font-weight:700;letter-spacing:-0.003px;">BA_GLOBAL_CHILD</div>
<div class="t" style="left:1319.96px;top:1004px;font-size:15.5px;line-height:15.5px;color:#f2f2f2;font-weight:400;letter-spacing:0.638px;">AUM: $0</div>
<div class="t" style="left:1318.72px;top:1024px;font-size:15.5px;line-height:15.5px;color:#f2f2f2;font-weight:400;letter-spacing:0.468px;">PNL: 0% · $0</div>
<svg class="b" style="left:1719px;top:700px" width="24" height="24" viewBox="0 0 24 24"><path d="M4 2.5 h2 a14 14 0 0 1 14 14 v4" fill="none" stroke="#4a4b4f" stroke-width="2.5"/></svg>
<div class="b" style="left:1734px;top:718px;width:10px;height:5px;background:#4a4b4f;border-radius:5px 5px 0 0"></div>
<div class="b" style="left:1612px;top:723px;width:254px;height:144px;background:#262626;border:1px solid #3a3a3c;border-radius:5px;box-sizing:border-box;"></div>
<svg class="b" style="left:1623px;top:734px" width="41" height="41" viewBox="0 0 41 41"><rect width="41" height="41" rx="6" fill="#7580c8"/><rect x="10" y="15.4" width="21" height="14.6" rx="2.4" fill="none" stroke="#fff" stroke-width="1.8"/><path d="M16.8 15.4 v-3 a2.6 2.6 0 0 1 2.6 -2.6 h2.6 a2.6 2.6 0 0 1 2.6 2.6 v3" fill="none" stroke="#fff" stroke-width="1.8"/></svg>
<div class="b" style="left:1669px;top:734px;width:185px;height:41px;background:#3a3a3c;border-radius:6px;"></div>
<div class="t" style="left:1677.81px;top:745px;font-size:17px;line-height:17px;color:#fff;font-weight:700;letter-spacing:-0.189px;">GLOBAL_001</div>
<div class="t" style="left:1624.16px;top:788px;font-size:15.5px;line-height:15.5px;color:#f2f2f2;font-weight:400;letter-spacing:0.606px;">AUM: $0</div>
<div class="t" style="left:1623.07px;top:808px;font-size:15.5px;line-height:15.5px;color:#f2f2f2;font-weight:400;letter-spacing:0.405px;">PNL: 0% · $0</div>
<div class="t" style="left:1622.73px;top:839px;font-size:15.5px;line-height:15.5px;color:#a3a5ad;font-weight:400;letter-spacing:0.633px;">Show Less</div>
<svg class="b" style="left:1718px;top:842px" width="14" height="9" viewBox="0 0 14 9"><path d="M1 7.5 l6 -6 l6 6" fill="none" stroke="#a3a5ad" stroke-width="1.6"/></svg>
<div class="b" style="left:1734px;top:867px;width:10px;height:5px;background:#4a4b4f;border-radius:0 0 5px 5px"></div>
<div class="b" style="left:1737.75px;top:870px;width:2.5px;height:47px;background:#4a4b4f;border-radius:0px;"></div>
<div class="b" style="left:1734px;top:914px;width:10px;height:5px;background:#4a4b4f;border-radius:5px 5px 0 0"></div>
<div class="b" style="left:1612px;top:919px;width:254px;height:400px;background:#1c1c1e;border:1px solid #2c2c2e;border-radius:5px;box-sizing:border-box;"></div>
<div class="b" style="left:1618px;top:925px;width:242px;height:94px;background:#262626;border:1px solid #3a3a3c;border-radius:5px;box-sizing:border-box;"></div>
<svg class="b" style="left:1629px;top:936px" width="41" height="41" viewBox="0 0 41 41"><rect width="41" height="41" rx="6" fill="#7fbcc8"/><path d="M7.6 10.6 a2 2 0 0 1 2 -2 h5 l3 3 h2.7 a2 2 0 0 1 2 2 v16.4 a2 2 0 0 1 -2 2 h-10.7 a2 2 0 0 1 -2 -2z" fill="none" stroke="#fff" stroke-width="1.5" stroke-linejoin="round"/><path d="M22.3 13.2 l9.3 2.4 v3.9 h-9.3 M25.4 19.5 v6.5 M28.8 19.5 v6.5 M22.3 26 h9.3 v3.9 h-9.3" fill="none" stroke="#fff" stroke-width="1.5"/></svg>
<div class="b" style="left:1675px;top:936px;width:173px;height:41px;background:#3a3a3c;border-radius:6px;"></div>
<div class="t" style="left:1684.93px;top:949px;font-size:15.5px;line-height:15.5px;color:#fff;font-weight:700;letter-spacing:0.198px;">Bank Accounts</div>
<div class="t" style="left:1628.86px;top:990px;font-size:15.5px;line-height:15.5px;color:#a3a5ad;font-weight:400;letter-spacing:0.635px;">Show Less</div>
<svg class="b" style="left:1724px;top:993px" width="14" height="9" viewBox="0 0 14 9"><path d="M1 7.5 l6 -6 l6 6" fill="none" stroke="#a3a5ad" stroke-width="1.6"/></svg>
<div class="b" style="left:1618px;top:1024px;width:242px;height:137px;background:#262626;border:1px solid #3a3a3c;border-radius:5px;box-sizing:border-box;"></div>
<svg class="b" style="left:1629px;top:1035px" width="41" height="41" viewBox="0 0 41 41"><rect width="41" height="41" rx="6" fill="#7fbcc8"/><path d="M10.9 16.2 v-3.2 l9.8 -2.9 l9.8 2.9 v3.2z" fill="none" stroke="#fff" stroke-width="1.7" stroke-linejoin="round"/><path d="M12.8 16.4 v9.6 M17.9 16.4 v9.6 M23.5 16.4 v9.6 M28.7 16.4 v9.6" fill="none" stroke="#fff" stroke-width="1.7"/><rect x="10.9" y="26.2" width="19.6" height="3.9" rx="0.8" fill="none" stroke="#fff" stroke-width="1.7"/></svg>
<div class="b" style="left:1675px;top:1035px;width:173px;height:41px;background:#3a3a3c;border-radius:6px;"></div>
<div class="t" style="left:1682.58px;top:1048px;font-size:17px;line-height:17px;color:#fff;font-weight:700;letter-spacing:-1.064px;">BA1</div>
<div class="t" style="left:1629.89px;top:1109px;font-size:15.5px;line-height:15.5px;color:#f2f2f2;font-weight:400;letter-spacing:0.579px;">AUM: $0</div>
<div class="t" style="left:1628.67px;top:1129px;font-size:15.5px;line-height:15.5px;color:#f2f2f2;font-weight:400;letter-spacing:0.399px;">PNL: 0% · $0</div>
<svg class="b" style="left:2024px;top:700px" width="24" height="24" viewBox="0 0 24 24"><path d="M4 2.5 h2 a14 14 0 0 1 14 14 v4" fill="none" stroke="#4a4b4f" stroke-width="2.5"/></svg>
<div class="b" style="left:2039px;top:718px;width:10px;height:5px;background:#4a4b4f;border-radius:5px 5px 0 0"></div>
<div class="b" style="left:1917px;top:723px;width:254px;height:144px;background:#262626;border:1px solid #3a3a3c;border-radius:5px;box-sizing:border-box;"></div>
<svg class="b" style="left:1928px;top:734px" width="41" height="41" viewBox="0 0 41 41"><rect width="41" height="41" rx="6" fill="#7580c8"/><rect x="10" y="15.4" width="21" height="14.6" rx="2.4" fill="none" stroke="#fff" stroke-width="1.8"/><path d="M16.8 15.4 v-3 a2.6 2.6 0 0 1 2.6 -2.6 h2.6 a2.6 2.6 0 0 1 2.6 2.6 v3" fill="none" stroke="#fff" stroke-width="1.8"/></svg>
<div class="b" style="left:1974px;top:734px;width:185px;height:41px;background:#3a3a3c;border-radius:6px;"></div>
<div class="t" style="left:1977.41px;top:746px;font-size:17px;line-height:17px;color:#fff;font-weight:700;letter-spacing:-0.216px;">VENTURES_001</div>
<div class="t" style="left:1929.16px;top:788px;font-size:15.5px;line-height:15.5px;color:#f2f2f2;font-weight:400;letter-spacing:0.606px;">AUM: $0</div>
<div class="t" style="left:1928.07px;top:808px;font-size:15.5px;line-height:15.5px;color:#f2f2f2;font-weight:400;letter-spacing:0.405px;">PNL: 0% · $0</div>
<div class="t" style="left:1927.73px;top:839px;font-size:15.5px;line-height:15.5px;color:#a3a5ad;font-weight:400;letter-spacing:0.633px;">Show Less</div>
<svg class="b" style="left:2023px;top:842px" width="14" height="9" viewBox="0 0 14 9"><path d="M1 7.5 l6 -6 l6 6" fill="none" stroke="#a3a5ad" stroke-width="1.6"/></svg>
<div class="b" style="left:2039px;top:867px;width:10px;height:5px;background:#4a4b4f;border-radius:0 0 5px 5px"></div>
<div class="b" style="left:2042.75px;top:870px;width:2.5px;height:47px;background:#4a4b4f;border-radius:0px;"></div>
<div class="b" style="left:2039px;top:914px;width:10px;height:5px;background:#4a4b4f;border-radius:5px 5px 0 0"></div>
<div class="b" style="left:1917px;top:919px;width:254px;height:400px;background:#1c1c1e;border:1px solid #2c2c2e;border-radius:5px;box-sizing:border-box;"></div>
<div class="b" style="left:1923px;top:925px;width:242px;height:94px;background:#262626;border:1px solid #3a3a3c;border-radius:5px;box-sizing:border-box;"></div>
<svg class="b" style="left:1934px;top:936px" width="41" height="41" viewBox="0 0 41 41"><rect width="41" height="41" rx="6" fill="#7fbcc8"/><path d="M7.6 10.6 a2 2 0 0 1 2 -2 h5 l3 3 h2.7 a2 2 0 0 1 2 2 v16.4 a2 2 0 0 1 -2 2 h-10.7 a2 2 0 0 1 -2 -2z" fill="none" stroke="#fff" stroke-width="1.5" stroke-linejoin="round"/><path d="M22.3 13.2 l9.3 2.4 v3.9 h-9.3 M25.4 19.5 v6.5 M28.8 19.5 v6.5 M22.3 26 h9.3 v3.9 h-9.3" fill="none" stroke="#fff" stroke-width="1.5"/></svg>
<div class="b" style="left:1980px;top:936px;width:173px;height:41px;background:#3a3a3c;border-radius:6px;"></div>
<div class="t" style="left:1989.93px;top:949px;font-size:15.5px;line-height:15.5px;color:#fff;font-weight:700;letter-spacing:0.198px;">Bank Accounts</div>
<div class="t" style="left:1933.86px;top:990px;font-size:15.5px;line-height:15.5px;color:#a3a5ad;font-weight:400;letter-spacing:0.635px;">Show Less</div>
<svg class="b" style="left:2029px;top:993px" width="14" height="9" viewBox="0 0 14 9"><path d="M1 7.5 l6 -6 l6 6" fill="none" stroke="#a3a5ad" stroke-width="1.6"/></svg>
<div class="b" style="left:1923px;top:1024px;width:242px;height:137px;background:#262626;border:1px solid #3a3a3c;border-radius:5px;box-sizing:border-box;"></div>
<svg class="b" style="left:1934px;top:1035px" width="41" height="41" viewBox="0 0 41 41"><rect width="41" height="41" rx="6" fill="#7fbcc8"/><path d="M10.9 16.2 v-3.2 l9.8 -2.9 l9.8 2.9 v3.2z" fill="none" stroke="#fff" stroke-width="1.7" stroke-linejoin="round"/><path d="M12.8 16.4 v9.6 M17.9 16.4 v9.6 M23.5 16.4 v9.6 M28.7 16.4 v9.6" fill="none" stroke="#fff" stroke-width="1.7"/><rect x="10.9" y="26.2" width="19.6" height="3.9" rx="0.8" fill="none" stroke="#fff" stroke-width="1.7"/></svg>
<div class="b" style="left:1980px;top:1035px;width:173px;height:41px;background:#3a3a3c;border-radius:6px;"></div>
<div class="t" style="left:1990.22px;top:1047px;font-size:17px;line-height:17px;color:#fff;font-weight:700;letter-spacing:-0.079px;">GLOBAL_CHILD</div>
<div class="t" style="left:1934.89px;top:1109px;font-size:15.5px;line-height:15.5px;color:#f2f2f2;font-weight:400;letter-spacing:0.579px;">AUM: $0</div>
<div class="t" style="left:1933.67px;top:1129px;font-size:15.5px;line-height:15.5px;color:#f2f2f2;font-weight:400;letter-spacing:0.399px;">PNL: 0% · $0</div>
<svg class="b" style="left:2329px;top:700px" width="24" height="24" viewBox="0 0 24 24"><path d="M4 2.5 h2 a14 14 0 0 1 14 14 v4" fill="none" stroke="#4a4b4f" stroke-width="2.5"/></svg>
<div class="b" style="left:2344px;top:718px;width:10px;height:5px;background:#4a4b4f;border-radius:5px 5px 0 0"></div>
<div class="b" style="left:2222px;top:723px;width:254px;height:144px;background:#262626;border:1px solid #3a3a3c;border-radius:5px;box-sizing:border-box;"></div>
<svg class="b" style="left:2233px;top:734px" width="41" height="41" viewBox="0 0 41 41"><rect width="41" height="41" rx="6" fill="#7580c8"/><rect x="10" y="15.4" width="21" height="14.6" rx="2.4" fill="none" stroke="#fff" stroke-width="1.8"/><path d="M16.8 15.4 v-3 a2.6 2.6 0 0 1 2.6 -2.6 h2.6 a2.6 2.6 0 0 1 2.6 2.6 v3" fill="none" stroke="#fff" stroke-width="1.8"/></svg>
<div class="b" style="left:2279px;top:734px;width:185px;height:41px;background:#3a3a3c;border-radius:6px;"></div>
<div class="t" style="left:2287.84px;top:747px;font-size:15.5px;line-height:15.5px;color:#fff;font-weight:700;letter-spacing:0.122px;">PF For Close</div>
<div class="t" style="left:2234.16px;top:788px;font-size:15.5px;line-height:15.5px;color:#f2f2f2;font-weight:400;letter-spacing:0.606px;">AUM: $0</div>
<div class="t" style="left:2233.07px;top:808px;font-size:15.5px;line-height:15.5px;color:#f2f2f2;font-weight:400;letter-spacing:0.405px;">PNL: 0% · $0</div>
<div class="t" style="left:2232.73px;top:839px;font-size:15.5px;line-height:15.5px;color:#a3a5ad;font-weight:400;letter-spacing:0.633px;">Show Less</div>
<svg class="b" style="left:2328px;top:842px" width="14" height="9" viewBox="0 0 14 9"><path d="M1 7.5 l6 -6 l6 6" fill="none" stroke="#a3a5ad" stroke-width="1.6"/></svg>
<div class="b" style="left:2344px;top:867px;width:10px;height:5px;background:#4a4b4f;border-radius:0 0 5px 5px"></div>
<div class="b" style="left:2347.75px;top:870px;width:2.5px;height:47px;background:#4a4b4f;border-radius:0px;"></div>
<div class="b" style="left:2344px;top:914px;width:10px;height:5px;background:#4a4b4f;border-radius:5px 5px 0 0"></div>
<div class="b" style="left:2222px;top:919px;width:254px;height:134px;background:#262626;border:1px solid #3a3a3c;border-radius:5px;box-sizing:border-box;"></div>
<svg class="b" style="left:2233px;top:930px" width="41" height="41" viewBox="0 0 41 41"><rect width="41" height="41" rx="6" fill="#7fbcc8"/><path d="M10.9 16.2 v-3.2 l9.8 -2.9 l9.8 2.9 v3.2z" fill="none" stroke="#fff" stroke-width="1.7" stroke-linejoin="round"/><path d="M12.8 16.4 v9.6 M17.9 16.4 v9.6 M23.5 16.4 v9.6 M28.7 16.4 v9.6" fill="none" stroke="#fff" stroke-width="1.7"/><rect x="10.9" y="26.2" width="19.6" height="3.9" rx="0.8" fill="none" stroke="#fff" stroke-width="1.7"/></svg>
<div class="b" style="left:2279px;top:930px;width:185px;height:41px;background:#3a3a3c;border-radius:6px;"></div>
<div class="t" style="left:2288.99px;top:943px;font-size:15.5px;line-height:15.5px;color:#fff;font-weight:700;letter-spacing:0.191px;">BA ON CLOSE PF</div>
<div class="t" style="left:2233.96px;top:1004px;font-size:15.5px;line-height:15.5px;color:#f2f2f2;font-weight:400;letter-spacing:0.638px;">AUM: $0</div>
<div class="t" style="left:2232.72px;top:1024px;font-size:15.5px;line-height:15.5px;color:#f2f2f2;font-weight:400;letter-spacing:0.468px;">PNL: 0% · $0</div>
<div class="b" style="left:2138.5px;top:1058px;width:2.8px;height:2.8px;background:#fff;border-radius:0.6px"></div>
<div class="b" style="left:36px;top:315px;width:2479px;height:845px;background:none;border:4px solid #76cfc1;border-radius:21px;box-sizing:border-box;"></div>
</body></html>
